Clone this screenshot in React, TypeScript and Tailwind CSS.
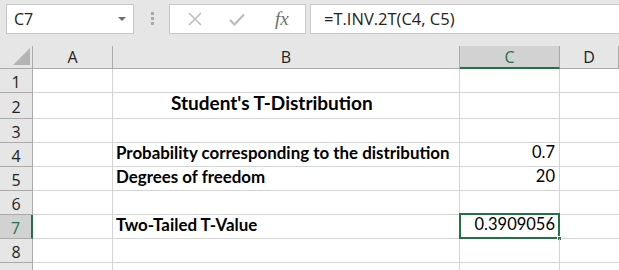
import React from 'react'

const cols = [
  { key: 'A', w: 'w-[80px]' },
  { key: 'B', w: 'w-[347px]' },
  { key: 'C', w: 'w-[100px]' },
  { key: 'D', w: 'flex-1' },
]

type Row = { n: number; h: string; b?: string; c?: string; title?: boolean }

const rows: Row[] = [
  { n: 1, h: 'h-[24px]' },
  { n: 2, h: 'h-[26px]', b: "Student's T-Distribution", title: true },
  { n: 3, h: 'h-[24px]' },
  { n: 4, h: 'h-[24px]', b: 'Probability corresponding to the distribution', c: '0.7' },
  { n: 5, h: 'h-[24px]', b: 'Degrees of freedom', c: '20' },
  { n: 6, h: 'h-[24px]' },
  { n: 7, h: 'h-[24px]', b: 'Two-Tailed T-Value', c: '0.3909056' },
  { n: 8, h: 'h-[24px]' },
  { n: 9, h: 'h-[24px]' },
]

function Toolbar() {
  return (
    <div className="flex h-[46px] items-start gap-0 bg-[#e6e6e6] pt-[4px] pl-[6px]">
      {/* name box */}
      <div className="flex h-[30px] w-[128px] items-center justify-between border border-[#c6c6c6] bg-white pl-[7px] pr-[7px]">
        <span className="font-['Open_Sans'] text-[16px] text-[#222]">C7</span>
        <svg width="8" height="4" viewBox="0 0 8 4">
          <path d="M0 0h8L4 4z" fill="#6e6e6e" />
        </svg>
      </div>
      {/* dots */}
      <div className="ml-[17px] mr-[15px] mt-[8px] flex flex-col gap-[2px]">
        <div className="h-[3px] w-[3px] bg-[#a9a9a9]" />
        <div className="h-[3px] w-[3px] bg-[#a9a9a9]" />
        <div className="h-[3px] w-[3px] bg-[#a9a9a9]" />
      </div>
      {/* fx buttons */}
      <div className="flex h-[30px] w-[137px] items-center border border-[#c6c6c6] bg-white">
        <svg className="ml-[18px]" width="14" height="14" viewBox="0 0 14 14">
          <path d="M1 1L13 13M13 1L1 13" stroke="#bdbdbd" strokeWidth="1.6" />
        </svg>
        <svg className="ml-[27px]" width="16" height="13" viewBox="0 0 16 13">
          <path d="M1 7l4.5 4.5L15 1.5" stroke="#bdbdbd" strokeWidth="2.2" fill="none" />
        </svg>
        <span className="ml-[30px] font-['Liberation_Serif'] text-[19px] italic text-[#6e6e6e]">fx</span>
      </div>
      {/* formula */}
      <div className="ml-[4px] flex h-[30px] flex-1 items-center border border-r-0 border-[#c6c6c6] bg-white pl-[13px]">
        <span className="font-['Open_Sans'] text-[16.5px] text-[#222]">=T.INV.2T(C4, C5)</span>
      </div>
    </div>
  )
}

function HeaderRow() {
  return (
    <div className="flex h-[23px] bg-[#e6e6e6]">
      <div className="relative w-[33px] border-r border-b border-[#ababab]">
        <svg className="absolute right-[2px] bottom-[3px]" width="17" height="17" viewBox="0 0 17 17">
          <path d="M17 0V17H0z" fill="#b4b4b4" />
        </svg>
      </div>
      {cols.map((c) =>
        c.key === 'C' ? (
          <div
            key={c.key}
            className={`${c.w} flex items-center justify-center border-r border-b-2 border-r-[#ababab] border-b-[#217346] bg-[#d2d2d2] font-['Open_Sans'] text-[16px] text-[#217346]`}
          >
            {c.key}
          </div>
        ) : (
          <div
            key={c.key}
            className={`${c.w} flex items-center justify-center border-r border-b border-[#ababab] font-['Open_Sans'] text-[16px] text-[#222]`}
          >
            {c.key}
          </div>
        ),
      )}
    </div>
  )
}

function SheetRow({ r }: { r: Row }) {
  const sel = r.n === 7
  return (
    <div className={`flex ${r.h}`}>
      {sel ? (
        <div className="flex w-[33px] items-center justify-center border-r-2 border-b border-r-[#217346] border-b-[#ababab] bg-[#d2d2d2] pt-[2px] font-['Open_Sans'] text-[16px] text-[#217346]">
          {r.n}
        </div>
      ) : (
        <div className="flex w-[33px] items-center justify-center overflow-hidden border-r border-b border-[#ababab] bg-[#e6e6e6] pt-[2px] font-['Open_Sans'] text-[16px] text-[#222]">
          {r.n < 9 ? r.n : ''}
        </div>
      )}
      <div className="w-[80px] border-r border-b border-[#d4d4d4]" />
      <div
        className={`flex w-[347px] items-end border-r border-b border-[#d4d4d4] pb-[1px] font-['Lato'] font-bold text-black ${
          r.title ? 'pl-[58px] text-[19px]' : 'pl-[3px] text-[16.9px]'
        }`}
      >
        {r.b}
      </div>
      <div className="relative flex w-[100px] items-end justify-end border-r border-b border-[#d4d4d4] pr-[4px] pb-[1px] font-['Lato'] text-[16.5px] text-black">
        {r.c}
        {sel && (
          <>
            <div className="absolute -top-[2px] -left-[1px] -right-[1px] -bottom-[1px] border-2 border-[#217346]" />
            <div className="absolute -right-[3px] -bottom-[3px] h-[5px] w-[5px] border border-white bg-[#217346]" />
          </>
        )}
      </div>
      <div className="flex-1 border-b border-[#d4d4d4]" />
    </div>
  )
}

export default function App() {
  return (
    <div className="h-[270px] w-[619px] overflow-hidden bg-white">
      <Toolbar />
      <HeaderRow />
      {rows.map((r) => (
        <SheetRow key={r.n} r={r} />
      ))}
    </div>
  )
}
